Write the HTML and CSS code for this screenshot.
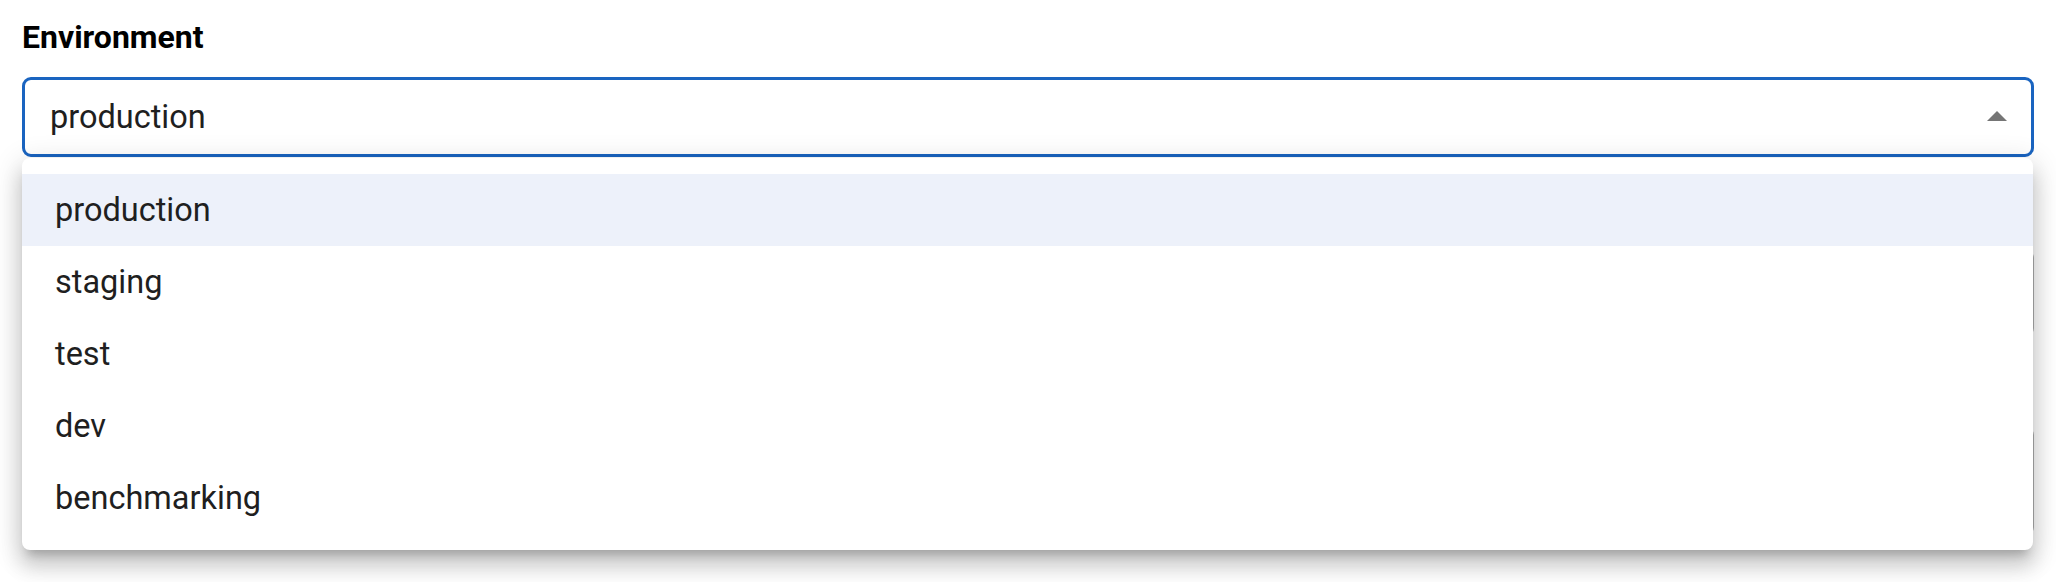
FILE: index.html
```html
<!DOCTYPE html>
<html>
<head>
<meta charset="utf-8">
<link rel="stylesheet" href="styles.css">
</head>
<body>
<div class="page">
  <div class="label">Environment</div>
  <div class="field">
    <div class="select">
      <span class="value">production</span>
      <svg class="arrow" width="20" height="10" viewBox="0 0 20 10"><path d="M0 10 L10 0 L20 10 Z" fill="#757575"/></svg>
    </div>
    <div class="menu">
      <div class="item active">production</div>
      <div class="item">staging</div>
      <div class="item">test</div>
      <div class="item">dev</div>
      <div class="item">benchmarking</div>
    </div>
  </div>
  <div class="under under-a"></div>
  <div class="under under-b"></div>
</div>
</body>
</html>
```
FILE: styles.css
```css
html, body {
  margin: 0;
  background: #ffffff;
}
html {
  height: 100%;
}
body {
  min-height: 582px;
  overflow: hidden;
  font-family: Roboto, "Liberation Sans", sans-serif;
}
.page {
  padding: 18px 22px 0 22px;
}
.label {
  font-size: 32px;
  font-weight: 700;
  color: #000;
  line-height: normal;
  margin-bottom: 21px;
}
.field {
  position: relative;
  z-index: 2;
}
.select {
  box-sizing: border-box;
  height: 80px;
  border: 3.5px solid #1a64c0;
  border-radius: 9px;
  display: flex;
  align-items: center;
  justify-content: space-between;
  padding: 0 24px 0 25px;
  font-size: 32.5px;
  color: #1f1f1f;
  background: #fff;
}
.arrow {
  display: block;
  margin-top: -2px;
}
.menu {
  position: absolute;
  top: 81px;
  left: 0;
  right: 1px;
  background: #fff;
  border-radius: 8px;
  padding: 16px 0;
  box-shadow: 0 10px 10px -6px rgba(0,0,0,0.2), 0 16px 20px 2px rgba(0,0,0,0.14), 0 6px 28px 4px rgba(0,0,0,0.12);
}
.item {
  height: 72px;
  display: flex;
  align-items: center;
  padding-left: 33px;
  font-size: 32.5px;
  color: #1f1f1f;
}
.item.active {
  background: #edf1fa;
}
.under {
  box-sizing: border-box;
  border: 2px solid #b0b0b0;
  border-radius: 8px;
}
.under-a {
  margin-top: 93px;
  height: 86px;
}
.under-b {
  margin-top: 91px;
  height: 108px;
}
```
